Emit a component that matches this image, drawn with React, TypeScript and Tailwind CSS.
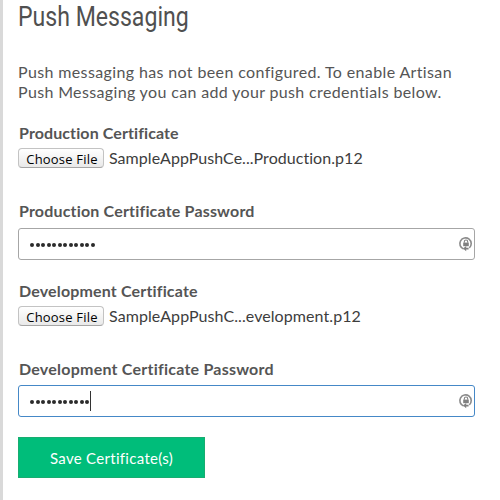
import React from "react";

function LockIcon() {
  return (
    <svg width="15" height="16" viewBox="0 0 15 16" fill="none" className="shrink-0">
      <path d="M5.6 13A5.7 5.7 0 1 1 11.3 11.9" stroke="#8c8c8c" strokeWidth="1.6" />
      <path d="M5 12.6l3.2-2.6v1.7h2.4v1.8H8.2v1.7z" fill="#808080" />
      <rect x="5.2" y="6.6" width="5.6" height="3.6" fill="#808080" />
      <path d="M6.3 6.8V5.7a1.7 1.7 0 0 1 3.4 0v1.1" stroke="#808080" strokeWidth="1.1" />
    </svg>
  );
}

function Label({ children, className }: { children: string; className: string }) {
  return (
    <div className={`h-5 pl-px whitespace-nowrap text-[16px] leading-5 font-bold text-[#555] ${className}`}>
      <span>{children}</span>
    </div>
  );
}

function FileRow({ name, className }: { name: string; className: string }) {
  return (
    <div className="flex h-5 items-center">
      <button className="flex h-5 w-[86px] shrink-0 items-center justify-center rounded-[4px] border border-[#c3c3c3] border-b-[#a5a5a5] bg-linear-to-b from-white to-[#e9e9e9] pt-0.5 pl-0.5 font-['Open_Sans',sans-serif] text-[13px] leading-none font-medium tracking-[0.2px] whitespace-nowrap text-black">
        Choose File
      </button>
      <span className={`ml-[5px] whitespace-nowrap text-[16px] leading-5 text-[#3d3d3d] ${className}`}>{name}</span>
    </div>
  );
}

function PasswordBox({ count, focused = false }: { count: number; focused?: boolean }) {
  return (
    <div
      className={`flex h-8 w-[457px] items-center justify-between rounded-[3px] border pr-px pl-[11px] ${
        focused ? "border-[#4588c7]" : "border-[#a6a6a6]"
      }`}
    >
      <div className="flex h-5 items-center">
        <div className="flex gap-[1.5px] pt-px">
          {Array.from({ length: count }, (_, i) => (
            <span key={i} className="size-[4px] rounded-full bg-[#2b2b2b]" />
          ))}
        </div>
        {focused && <span className="ml-px h-5 w-px bg-[#333]" />}
      </div>
      <LockIcon />
    </div>
  );
}

export default function App() {
  return (
    <main className="h-[500px] w-[500px] overflow-hidden border-l-[3px] border-[#d9d9d9] bg-white pl-[15px] font-[Lato,sans-serif] text-[#555]">
      <h1 className="h-[62px] origin-left scale-x-[0.855] pt-px font-[Roboto,sans-serif] text-[27px] leading-[33px] whitespace-nowrap text-[#505050]">
        Push Messaging
      </h1>
      <div className="h-[61px] text-[16px] leading-5 whitespace-nowrap">
        <p className="tracking-[0.37px]">Push messaging has not been configured. To enable Artisan</p>
        <p className="tracking-[0.35px]">Push Messaging you can add your push credentials below.</p>
      </div>
      <Label className="tracking-[0.1px]">Production Certificate</Label>
      <div className="mt-[5px]">
        <FileRow name="SampleAppPushCe...Production.p12" className="tracking-[0.05px]" />
      </div>
      <div className="mt-[33px]">
        <Label className="tracking-[0.18px]">Production Certificate Password</Label>
      </div>
      <div className="mt-[7px]">
        <PasswordBox count={12} />
      </div>
      <div className="mt-[21px]">
        <Label className="tracking-[0.16px]">Development Certificate</Label>
      </div>
      <div className="mt-[5px]">
        <FileRow name="SampleAppPushC...evelopment.p12" className="tracking-[0.08px]" />
      </div>
      <div className="mt-[33px]">
        <Label className="tracking-[0.23px]">Development Certificate Password</Label>
      </div>
      <div className="mt-[6px]">
        <PasswordBox count={11} focused />
      </div>
      <button className="mt-5 flex h-[41px] w-[187px] items-center justify-center border border-[#18ad70] bg-[#00bd7a] text-[15px] leading-5 tracking-[0.3px] text-white">
        Save Certificate(s)
      </button>
    </main>
  );
}
